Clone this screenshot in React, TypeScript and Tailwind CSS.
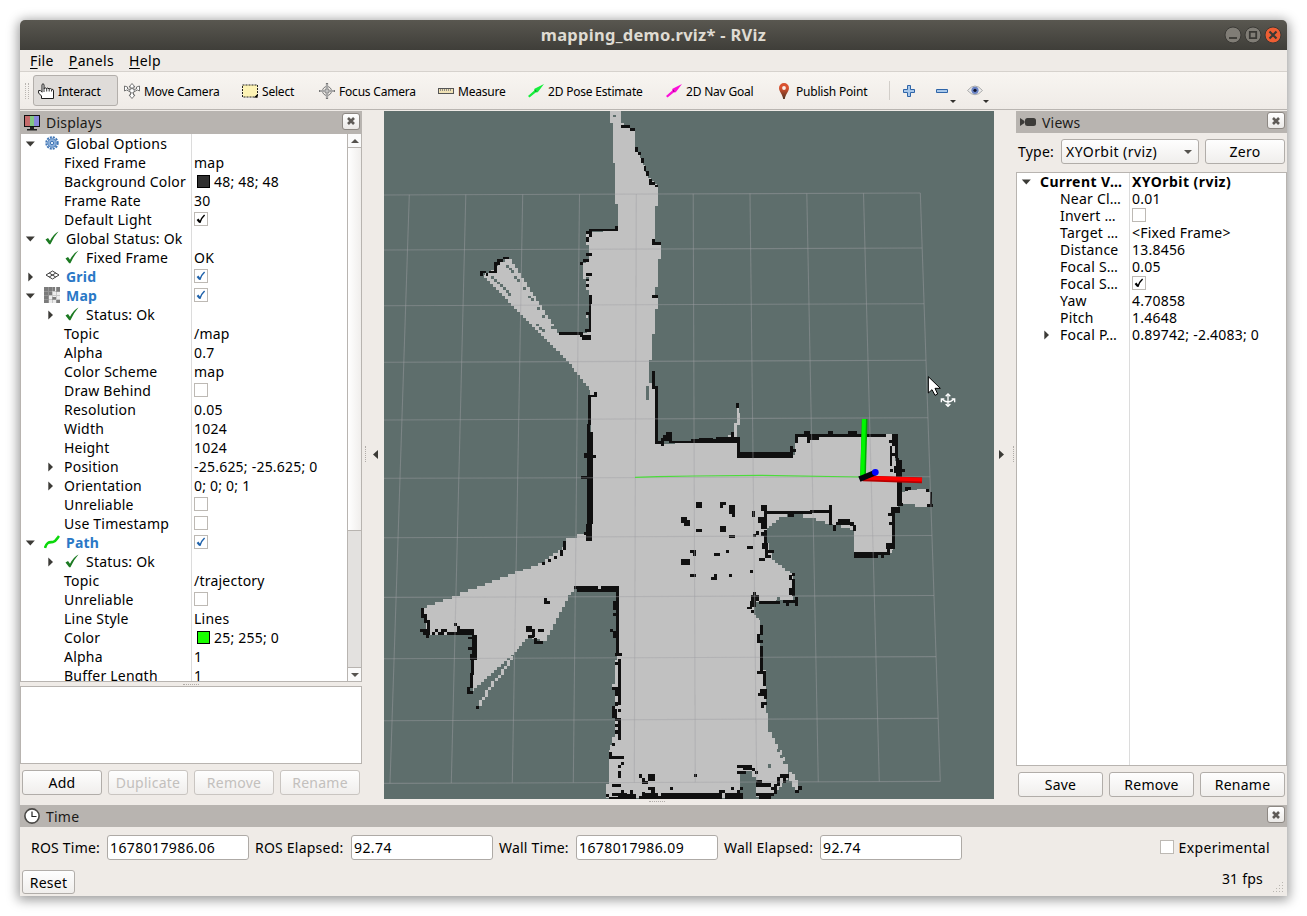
import React from "react";

/* ---------- occupancy map ---------- */

const CELL = 9;

// Turns a polygon into one whose slanted edges are stepped by map cells.
function stepped(points: string): string {
  const pts = points
    .trim()
    .split(/\s+/)
    .map((p) => p.split(",").map(Number));
  let d = `M${pts[0][0]} ${pts[0][1]}`;
  for (let i = 0; i < pts.length; i++) {
    const [x0, y0] = pts[i];
    const [x1, y1] = pts[(i + 1) % pts.length];
    const dx = x1 - x0;
    const dy = y1 - y0;
    const n = Math.max(1, Math.round(Math.min(Math.abs(dx), Math.abs(dy)) / CELL));
    for (let k = 0; k < n; k++) {
      d += `H${x0 + (dx * (k + 0.5)) / n}V${y0 + (dy * (k + 1)) / n}H${x0 + (dx * (k + 1)) / n}`;
    }
  }
  return d + "Z";
}

function rects(list: string): string {
  return list
    .trim()
    .split(/\s+/)
    .map((r) => {
      const [x, y, w, h] = r.split(",");
      return `M${x} ${y}h${w}v${h}h-${w}z`;
    })
    .join("");
}

const FREE = `678,3 711,3 711,39 720,39 720,48 752,55 752,110 762,125 780,165 795,205 822,230 822,288 813,288 813,398
831,400 831,447 822,447 822,530 813,530 813,558 822,560 822,597 813,597 813,672 804,672 804,750 795,750 795,820 813,828 813,1001
930,998 1060,998 1060,1035 1228,1035 1238,985 1238,976 1528,976 1543,1130 1543,1205 1528,1210 1528,1320 1508,1335 1410,1335
1410,1260 1356,1245 1338,1242 1283,1223 1228,1212 1190,1222 1150,1255 1150,1300 1168,1350 1208,1382 1226,1390 1228,1470 1123,1475
1110,1480 1112,1515 1128,1530 1128,1680 1146,1680 1146,1810 1158,1865 1188,1920 1218,1985 1208,2010 1173,2050 1118,2060 1116,2010
1078,1985 1068,1992 1068,2065 666,2065 666,2022 675,2022 675,1920 690,1890 693,1650 700,1650 700,1438 575,1438 555,1455 485,1593
450,1588 435,1578 385,1635 265,1742 270,1565 130,1575 115,1495 290,1428 475,1358 540,1310 552,1283 605,1272 620,1230 620,840 575,785
550,752 456,660 295,495 330,480 345,455 380,447 525,670 600,670 615,660 615,500 598,500 598,460 615,450 615,365 700,360
702,282 693,282 693,158 687,158 687,39 678,39`;

type Patch = { x: number; y: number; wall: string; open?: string; unknown?: string };

const PATCHES: Patch[] = [
  {
    x: 0,
    y: 0,
    wall: `711,45,27,9 738,54,15,9 753,111,9,15 762,126,9,9 771,144,9,15 780,168,6,15 786,183,9,15 795,207,9,18 804,216,9,9
813,225,9,6 693,348,9,12 615,357,87,6 606,363,18,9 615,363,9,18 606,381,9,15 606,429,18,9 597,447,18,9 588,456,9,9 606,489,18,9
606,507,9,6 606,522,9,9 615,555,9,27 615,582,6,84 606,606,9,9 603,657,18,9 525,666,72,9 588,675,12,6 597,675,24,15 804,387,9,18
804,396,27,9 804,555,18,9 357,441,18,6 339,447,18,9 330,456,18,9 330,465,9,24 315,483,24,6 288,483,18,6 288,483,9,15 306,489,6,9`,
    unknown: `687,15,9,6 366,465,9,9 375,474,9,6 381,480,9,9 390,498,9,9 399,507,9,9 417,531,9,9 432,558,9,6 441,564,9,9
459,591,9,9 474,615,9,9 456,642,9,6 465,651,9,9 474,657,9,9 501,648,9,9 321,498,9,9 330,507,9,9 339,516,9,6 348,522,9,9
357,531,9,9 366,540,9,9 372,549,9,9`,
    open: `597,465,9,42 606,372,9,9 606,396,9,9 606,513,9,9 606,531,9,9 606,615,6,9`,
  },
  {
    x: 0,
    y: 660,
    unknown: `786,168,9,42`,
    open: `618,180,12,16`,
    wall: `594,15,27,15 630,186,9,15 612,195,21,6 612,195,9,90 609,282,9,30 609,306,18,276 600,369,9,15 627,375,9,9 591,438,18,9
606,582,18,51 600,606,9,9 537,633,9,27 528,660,9,18 510,678,9,9 492,687,9,6 804,123,9,54 813,168,9,174 822,333,18,9
831,324,9,24 837,315,18,18 846,306,18,27 855,333,75,6 921,330,9,9 891,561,18,18 900,570,18,18`,
  },
  {
    x: 0,
    y: 1350,
    open: `378,288,9,12 369,300,9,18 360,318,9,9 351,327,9,18 342,345,9,9 333,354,9,9 321,363,9,18 312,381,9,9 303,390,9,21
294,411,9,9 285,420,9,18 693,354,9,27 684,372,9,9 684,531,12,60`,
    wall: `474,6,9,9 492,0,9,6 891,0,27,15 918,42,12,9 480,114,9,18 480,123,18,9 570,78,72,9 651,78,54,9 579,87,126,9 696,87,9,195
687,123,9,27 687,159,9,9 678,207,9,9 687,213,9,21 693,279,21,9 702,297,9,138 693,306,9,9 684,381,18,9 693,390,9,18
693,426,9,12 684,438,9,36 693,447,6,27 702,447,9,9 702,474,9,66 693,474,9,9 693,492,9,9 693,510,9,12 684,549,9,9 675,576,9,21 675,588,45,9
711,606,9,9 702,615,9,9 702,633,9,21 684,672,27,9 765,642,9,12 774,654,9,9 774,663,18,9 792,642,21,21 792,681,21,9 801,690,12,12
858,681,9,9 666,702,9,9 675,711,27,6 711,690,9,12 684,699,45,9 702,702,54,15 738,690,9,12 774,696,9,12
783,699,39,12 765,708,66,9 831,699,99,18 111,144,9,30 120,162,9,18 120,180,18,9 129,189,9,36 108,207,27,9 117,213,18,12
126,225,9,9 144,216,9,9 153,207,9,9 162,216,18,9 171,207,18,9 189,216,81,9 210,189,9,9 219,198,9,9 219,207,45,12
261,207,9,18 264,225,15,75 252,231,12,6 252,261,12,9 258,282,20,18 261,300,9,45 258,339,9,45 249,381,9,21 249,393,18,9 276,438,9,9
426,198,18,18 444,207,9,24 432,225,18,9 462,207,18,9 450,234,9,18 459,243,18,9`,
  },
  {
    x: 888,
    y: 780,
    open: `171,114,6,21 171,130,9,35 162,160,10,40 144,195,12,6 617,192,18,9`,
    wall: `168,99,9,15 153,186,9,15 108,201,72,18 57,204,42,6 33,207,80,9 0,213,180,6 171,210,9,45 171,246,168,18 330,228,9,30
339,237,9,9 345,192,9,27 345,192,273,9 372,183,18,10 381,200,9,18 390,201,27,9 444,183,15,9 504,183,27,9 636,192,18,9
636,192,9,36 645,192,9,72 627,210,9,9 630,228,6,60 636,250,12,9 648,264,9,60 654,270,12,50 666,297,9,9 630,297,9,9
642,288,6,20 651,318,15,90 660,400,9,9 633,411,27,18 624,429,12,9 636,429,9,105 627,456,9,9 618,519,27,18 621,537,9,18
522,546,72,18 594,546,30,9 603,555,9,9 675,351,18,9 675,357,9,7 738,357,9,9 750,366,5,45 741,402,18,9 243,405,18,18
252,423,9,54 234,441,18,18 243,459,18,18 261,423,135,9 324,432,18,8 390,420,60,9 447,405,9,60 459,465,9,18 468,456,54,9
474,447,36,15 510,460,12,9 519,465,9,18 252,480,9,45 228,483,9,12 219,492,9,9 243,486,9,12 246,519,18,18 255,528,9,36 264,540,18,9
261,555,12,9 237,564,18,9 336,609,9,9 327,615,9,15 336,627,9,50 327,657,18,18 48,396,18,18 120,396,18,8 120,396,10,18
147,405,18,27 156,432,9,9 216,423,9,18 3,441,18,18 12,450,18,18 48,477,18,9 120,468,18,18 147,495,18,9 30,540,18,9
39,549,9,9 3,567,27,18 102,549,18,9 138,540,9,9 201,528,18,9 30,612,18,9 102,612,9,18 93,621,18,9 147,612,9,9 210,600,9,9`,
  },
  {
    x: 888,
    y: 1410,
    unknown: `264,552,9,12 180,582,9,36 189,573,27,84 216,591,12,66 291,507,9,9 300,525,9,9 309,543,9,9 291,51,9,12`,
    open: `327,576,9,27 336,582,9,18 345,600,9,30 336,600,9,21`,
    wall: `327,24,18,15 345,51,9,27 309,60,45,9 318,69,9,10 237,63,63,9 213,45,24,18 219,36,9,30 210,63,18,18 201,81,15,6
213,90,9,9 240,135,9,30 231,162,9,27 240,180,9,9 240,198,9,75 231,273,18,9 249,273,9,45 240,327,21,12 234,339,27,9
252,348,9,9 243,366,18,9 243,375,9,9 171,555,45,9 189,564,27,6 171,573,27,9 216,564,9,9 225,573,9,9 228,600,18,9
228,609,45,12 273,621,9,9 282,612,9,30 291,591,9,28 300,582,27,12 309,594,9,14 228,639,54,9 237,648,36,9 42,582,9,9
117,630,18,9 153,621,9,9 180,621,9,9 171,630,9,9 0,639,126,18 135,639,54,18 345,630,12,9 354,618,12,12`,
  },
];

const COLS: [number, number][] = [
  [352, 329], [409.3, 390], [465.8, 451.3], [522.7, 512.3], [579.5, 573.3], [636.3, 634.3],
  [693.2, 695.3], [750, 756.7], [806.8, 818.3], [863.5, 879.3], [920.3, 940.3],
];
const ROWS: [number, number][] = [
  [195, 193], [250, 248], [305.7, 303.7], [362.3, 360.3], [420, 417.7], [478.3, 476.7],
  [537.7, 535.5], [597.4, 595.5], [658.7, 656.6], [720.7, 718.4], [783.4, 781.4],
];

function MapView() {
  return (
    <svg className="block h-[688px] w-[610px]" viewBox="0 3 1830 2064">
      <rect x="0" y="3" width="1830" height="2064" fill="#5e6e6c" />
      <g shapeRendering="crispEdges">
        <path d={stepped(FREE)} fill="#c1c1c1" />
        <path d={stepped("1551,1146 1572,1140 1626,1137 1638,1146 1638,1191 1593,1191 1593,1182 1551,1182")} fill="#c1c1c1" />
        {PATCHES.map((p, i) => (
          <g key={i} transform={`translate(${p.x} ${p.y})`}>
            {p.unknown && <path d={rects(p.unknown)} fill="#5e6e6c" />}
            {p.open && <path d={rects(p.open)} fill="#c1c1c1" />}
            <path d={rects(p.wall)} fill="#101010" />
          </g>
        ))}
      </g>
      <g transform="scale(3) translate(-384 -110)" stroke="#a0a0a4" strokeOpacity="0.45" strokeWidth="1.1" fill="none">
        {COLS.map(([t, b], i) => (
          <line key={i} x1={t} y1={195 - i * 0.2} x2={b} y2={783.4 - i * 0.2} />
        ))}
        {ROWS.map(([l, r], i) => (
          <line key={i} x1={384} y1={l} x2={920.3 + ((r - 193) / 588.4) * 20} y2={r} />
        ))}
      </g>
      <path d="M753 1102 820 1100 930 1098 1128 1096 1428 1101" stroke="#4cdc3c" strokeWidth="3.500" fill="none" />
      <path d="M1436 1105 1614 1111" stroke="#b80000" strokeWidth="17" />
      <path d="M1436 1103 1614 1109" stroke="#ff0000" strokeWidth="11" />
      <path d="M1437 1102 1442 927" stroke="#00a800" strokeWidth="17" />
      <path d="M1435 1102 1440 927" stroke="#00f800" strokeWidth="12" />
      <path d="M1434 1104 1466 1091" stroke="#04040c" strokeWidth="17" strokeLinecap="square" />
      <circle cx="1474" cy="1087" r="10" fill="#0000ff" />
      <g transform="translate(888 780)">
        <path d="M745 20v49l11-10 9 17 8-4-8-17h16z" fill="#fff" stroke="#000" strokeWidth="3" strokeLinejoin="round" />
        <g fill="none" stroke="#fff" strokeWidth="4">
          <path d="M804 74v34M786 88q18 16 36 0" />
          <path d="M797 79l7-7 7 7M797 102l7 7 7-7M784 97v-10h9M824 97v-10h-9" />
        </g>
      </g>
    </svg>
  );
}

/* ---------- shared bits ---------- */

function Check({ on, blue }: { on?: boolean; blue?: boolean }) {
  return (
    <span className="flex size-[14px] items-center justify-center border border-[#bdb9b4] bg-white">
      {on && (
        <svg className="size-[12px]" viewBox="0 0 12 12" fill="none" stroke={blue ? "#1f62ab" : "#000"}>
          <path d="M2.500 6.200 5 9.400" strokeWidth="2.200" />
          <path d="M4.800 9.800Q6.200 5 9.600 2" strokeWidth="1.500" />
        </svg>
      )}
    </span>
  );
}

function Arrow({ open }: { open: boolean }) {
  return (
    <svg className="size-[10px]" viewBox="0 0 10 10" fill="#3c3b37">
      {open ? <path d="M.8 2.500h9L5.300 7.500z" /> : <path d="M3.300.5v9l4.700-4.500z" />}
    </svg>
  );
}

function CloseX() {
  return (
    <span className="mb-[3px] flex h-[17px] w-[18px] items-center justify-center rounded-[3px] border border-[#8d8883] bg-gradient-to-b from-white to-[#ebe9e7]">
      <svg className="size-[8px]" viewBox="0 0 8 8" stroke="#5f5b57" strokeWidth="2.600">
        <path d="M1 1l6 6M7 1 1 7" />
      </svg>
    </span>
  );
}

function Button({ label, size, disabled }: { label: string; size: string; disabled?: boolean }) {
  return (
    <button
      className={`flex items-center justify-center rounded-[3px] border bg-gradient-to-b from-[#fefefe] to-[#f0eeec] tracking-[0.25px] ${size} ${
        disabled ? "border-[#c9c5c1] text-[#c3c0bd]" : "border-[#b1ada9] text-black"
      }`}
    >
      {label}
    </button>
  );
}

function DockTitle({ icon, label, height }: { icon: React.ReactNode; label: string; height: string }) {
  return (
    <div className={`flex items-center bg-[#b8b4b0] pr-[2px] pl-1 ${height}`}>
      <span className="flex size-4 items-center justify-center">{icon}</span>
      <span className="flex-1 pl-[6px] text-[#1c1b19]">{label}</span>
      <CloseX />
    </div>
  );
}

/* ---------- tree icons ---------- */

const TickIcon = () => (
  <svg className="size-[14px]" viewBox="0 0 14 14">
    <path d="M.5 8.500 3 7l2 2.800Q8.500 3 13.500.5 8.500 6 5.400 13.300H4.200Z" fill="#1c7a22" />
  </svg>
);
const GearIcon = () => (
  <svg className="size-[14px]" viewBox="0 0 14 14" fill="none">
    <circle cx="7" cy="7" r="5.700" stroke="#3f75b5" strokeWidth="2" strokeDasharray="2 1" />
    <circle cx="7" cy="7" r="4.300" fill="#8db1dc" stroke="#5485bf" />
    <circle cx="7" cy="7" r="1.700" fill="#dfeaf7" stroke="#3f75b5" />
  </svg>
);
const GridIcon = () => (
  <svg className="size-[15px]" viewBox="0 0 15 15" fill="none" stroke="#3d3d3d">
    <path d="M1 7 7.500 3 14 7l-6.500 4zM4.200 5l6.500 4M10.800 5l-6.600 4" />
  </svg>
);
const MapIcon = () => (
  <svg className="size-4" viewBox="0 0 16 16" shapeRendering="crispEdges">
    <path d="M0 0h16v16H0z" fill="#ececec" />
    <path d="M0 0h11v4H8v4H5v8H0zM12 0h4v5h-4zM8 10h4v3H8zM12 13h4v3h-4z" fill="#7b7b7b" />
    <path d="M4 0v16M8 0v16M12 0v16M0 4h16M0 8h16M0 12h16" stroke="#aaa" strokeOpacity=".55" />
  </svg>
);
const PathIcon = () => (
  <svg className="size-4" viewBox="0 0 16 16">
    <path d="M1 14C3 7 6 8.500 9 8S13 4.500 15 2" fill="none" stroke="#0bd80b" strokeWidth="2.600" />
  </svg>
);

/* ---------- displays tree ---------- */

type Row = {
  name: string;
  depth?: number;
  open?: boolean;
  icon?: React.ReactNode;
  value?: string;
  check?: boolean;
  blue?: boolean;
  swatch?: string;
};

const DISPLAY_ROWS: Row[] = [
  { name: "Global Options", depth: 0, open: true, icon: <GearIcon /> },
  { name: "Fixed Frame", value: "map" },
  { name: "Background Color", value: "48; 48; 48", swatch: "bg-[#303030]" },
  { name: "Frame Rate", value: "30" },
  { name: "Default Light", check: true },
  { name: "Global Status: Ok", depth: 0, open: true, icon: <TickIcon /> },
  { name: "Fixed Frame", icon: <TickIcon />, value: "OK" },
  { name: "Grid", depth: 0, open: false, icon: <GridIcon />, check: true, blue: true },
  { name: "Map", depth: 0, open: true, icon: <MapIcon />, check: true, blue: true },
  { name: "Status: Ok", open: false, icon: <TickIcon /> },
  { name: "Topic", value: "/map" },
  { name: "Alpha", value: "0.7" },
  { name: "Color Scheme", value: "map" },
  { name: "Draw Behind", check: false },
  { name: "Resolution", value: "0.05" },
  { name: "Width", value: "1024" },
  { name: "Height", value: "1024" },
  { name: "Position", open: false, value: "-25.625; -25.625; 0" },
  { name: "Orientation", open: false, value: "0; 0; 0; 1" },
  { name: "Unreliable", check: false },
  { name: "Use Timestamp", check: false },
  { name: "Path", depth: 0, open: true, icon: <PathIcon />, check: true, blue: true },
  { name: "Status: Ok", open: false, icon: <TickIcon /> },
  { name: "Topic", value: "/trajectory" },
  { name: "Unreliable", check: false },
  { name: "Line Style", value: "Lines" },
  { name: "Color", value: "25; 255; 0", swatch: "bg-[#19ff00]" },
  { name: "Alpha", value: "1" },
  { name: "Buffer Length", value: "1" },
];

function DisplayRow({ row }: { row: Row }) {
  const top = row.depth === 0;
  return (
    <div className="flex h-[19px] shrink-0 items-center">
      <div className={`flex h-full w-[171px] items-center border-r border-[#dcdcdc] ${top ? "pl-1" : "pl-6"}`}>
        <span className="flex w-[19px] shrink-0 items-center">
          {row.open !== undefined && <Arrow open={row.open} />}
        </span>
        {row.icon && <span className={`flex w-4 shrink-0 items-center justify-center pb-0.5 ${top ? "mr-[6px]" : "mr-[6px]"}`}>{row.icon}</span>}
        <span className={`whitespace-nowrap ${row.blue ? "font-bold text-[#2a78c6]" : ""}`}>{row.name}</span>
      </div>
      <div className="flex items-center pl-[2px]">
        {row.swatch && <span className={`mr-1 ml-[3px] size-[13px] border border-black ${row.swatch}`} />}
        {row.check !== undefined && <span className="pb-0.5"><Check on={row.check} blue={row.blue} /></span>}
        {row.value}
      </div>
    </div>
  );
}

function Displays() {
  return (
    <div className="flex w-[342px] flex-col">
      <DockTitle
        height="h-[23px]"
        label="Displays"
        icon={
          <svg className="size-4" viewBox="0 0 16 16">
            <path d="M0 0h16v12H0z" fill="#111" />
            <path d="M1 1h5v10H1z" fill="#c66b6b" />
            <path d="M6 1h4v10H6z" fill="#83c783" />
            <path d="M10 1h5v10h-5z" fill="#8888dc" />
            <path d="M6 12h4v2h3v1.500H3V14h3z" fill="#222" />
          </svg>
        }
      />
      <div className="flex h-[548px] border-x border-b border-[#b8b4b0] bg-white">
        <div className="flex flex-1 flex-col overflow-hidden">
          {DISPLAY_ROWS.map((r, i) => (
            <DisplayRow key={i} row={r} />
          ))}
        </div>
        <div className="flex w-[14px] flex-col border-l border-[#b8b4b0] bg-[#e3e1df]">
          <div className="flex h-[14px] items-center justify-center border-b border-[#b8b4b0] bg-[#fafafa]">
            <svg className="h-1 w-2" viewBox="0 0 8 4" fill="#55524e"><path d="M0 4h8L4 0z" /></svg>
          </div>
          <div className="h-[383px] border-b border-[#b8b4b0] bg-gradient-to-r from-white to-[#f0eeec]" />
          <div className="flex-1" />
          <div className="flex h-[14px] items-center justify-center border-t border-[#b8b4b0] bg-[#fafafa]">
            <svg className="h-1 w-2" viewBox="0 0 8 4" fill="#55524e"><path d="M0 0h8L4 4z" /></svg>
          </div>
        </div>
      </div>
      <div className="flex h-1 items-center justify-center">
        <span className="w-4 border-t border-dotted border-[#b0aca8]" />
      </div>
      <div className="h-[78px] border border-[#b8b4b0] bg-white" />
      <div className="flex gap-[6px] px-[2px] pt-[6px]">
        <Button label="Add" size="h-[25px] w-[80px]" />
        <Button label="Duplicate" size="h-[25px] w-[80px]" disabled />
        <Button label="Remove" size="h-[25px] w-[80px]" disabled />
        <Button label="Rename" size="h-[25px] w-[80px]" disabled />
      </div>
    </div>
  );
}

/* ---------- views ---------- */

const VIEW_ROWS: Row[] = [
  { name: "Near Cl…", value: "0.01" },
  { name: "Invert …", check: false },
  { name: "Target …", value: "<Fixed Frame>" },
  { name: "Distance", value: "13.8456" },
  { name: "Focal S…", value: "0.05" },
  { name: "Focal S…", check: true },
  { name: "Yaw", value: "4.70858" },
  { name: "Pitch", value: "1.4648" },
  { name: "Focal P…", open: false, value: "0.89742; -2.4083; 0" },
];

function Views() {
  return (
    <div className="flex w-[271px] flex-col">
      <DockTitle
        height="h-[22px]"
        label="Views"
        icon={
          <svg className="h-2 w-4" viewBox="0 0 16 8" fill="#3c3b39">
            <path d="M0 0l4.500 3v2L0 8z" />
            <rect x="5" width="11" height="8" rx="2.500" />
          </svg>
        }
      />
      <div className="flex h-[39px] items-start pt-[6px] pl-[2px]">
        <span className="w-[43px] leading-[25px]">Type:</span>
        <div className="flex h-[25px] w-[138px] items-center justify-between rounded-[3px] border border-[#b1ada9] bg-gradient-to-b from-[#fefefe] to-[#f0eeec] pr-[6px] pl-1">
          <span className="tracking-[0.45px]">XYOrbit (rviz)</span>
          <svg className="h-1 w-2" viewBox="0 0 8 4" fill="#55524e"><path d="M0 0h8L4 4z" /></svg>
        </div>
        <span className="pl-[6px]"><Button label="Zero" size="h-[25px] w-[80px]" /></span>
      </div>
      <div className="flex h-[594px] flex-col border border-[#b8b4b0] bg-white">
        <div className="flex h-[17px] items-center font-bold">
          <div className="flex h-full w-[113px] items-center border-r border-[#dcdcdc] pl-1">
            <span className="flex w-[19px] shrink-0"><Arrow open /></span>
            <span className="whitespace-nowrap tracking-[0.45px]">Current V…</span>
          </div>
          <span className="pl-[2px] tracking-[0.45px]">XYOrbit (rviz)</span>
        </div>
        {VIEW_ROWS.map((r, i) => (
          <div key={i} className="flex h-[17px] items-center">
            <div className="flex h-full w-[113px] items-center border-r border-[#dcdcdc] pl-6">
              <span className="flex w-[19px] shrink-0">{r.open !== undefined && <Arrow open={false} />}</span>
              <span className="whitespace-nowrap">{r.name}</span>
            </div>
            <div className="flex items-center pl-[2px]">
              {r.check !== undefined && <span className="pb-0.5"><Check on={r.check} /></span>}
              {r.value}
            </div>
          </div>
        ))}
        <div className="w-[113px] flex-1 border-r border-[#dcdcdc]" />
      </div>
      <div className="flex gap-[6px] pt-[6px] pl-[2px]">
        <Button label="Save" size="h-[25px] w-[85px]" />
        <Button label="Remove" size="h-[25px] w-[85px]" />
        <Button label="Rename" size="h-[25px] w-[85px]" />
      </div>
    </div>
  );
}

/* ---------- toolbar ---------- */

const HandIcon = () => (
  <svg className="size-4" viewBox="0 0 16 16" fill="#fff" stroke="#1d1d1d">
    <path d="M3.500 15.500V13L.6 10V7.500h1.800l1.600 1.700V1.500q1-1.500 2 0V5.500q1.200-1.300 2.500 0q1.300-1 2.500.3q1.400-.8 2.500.4q2-.3 2 1.800V15.500z" />
    <path d="M6 5v4M8.700 5.500v3M11.200 6v2.500M13.500 6.500v2" strokeWidth=".9" />
  </svg>
);
const MoveIcon = () => (
  <svg className="size-4" viewBox="0 0 16 16" fill="#fff" stroke="#666" strokeWidth=".9">
    <path d="M8 .5 11 4H9v2.500L12.500 6V4l3-1v5l-2-1L9.500 9v3H11l-3 3.500L5 12h1.500V9L2.500 7l-2 1V3l3 1v2L7 6.500V4H5z" />
    <circle cx="8" cy="7.800" r="2.300" />
  </svg>
);
const SelectIcon = () => (
  <svg className="size-4" viewBox="0 0 16 16">
    <rect x=".5" y="2" width="15" height="12" fill="#fdf3b5" stroke="#222" strokeDasharray="2 1" />
    <path d="M15.500 11v3.500H12z" fill="#000" />
  </svg>
);
const FocusIcon = () => (
  <svg className="size-4" viewBox="0 0 16 16" fill="none" stroke="#777">
    <circle cx="8" cy="8" r="4.500" />
    <circle cx="8" cy="8" r="2.300" />
    <path d="M8 0v16M0 8h16" strokeWidth="2.200" />
    <path d="M8 1v14M1 8h14" stroke="#eee" strokeWidth=".8" />
  </svg>
);
const RulerIcon = () => (
  <svg className="size-4" viewBox="0 0 16 16">
    <rect x=".5" y="5.500" width="15" height="5" fill="#f0e2b6" stroke="#555" />
    <path d="M2.500 6v2M4.500 6v2M6.500 6v2M8.500 6v2M10.500 6v2M12.500 6v2" stroke="#777" strokeWidth=".8" />
  </svg>
);
const ArrowTool = ({ color, dark }: { color: string; dark: string }) => (
  <svg className="size-4" viewBox="0 0 16 16">
    <path d="M0 13 6 7.800 6.500 5.800 16 1 9.800 9.200 7.700 9.500 1.500 14.500z" fill={color} />
    <path d="M6.800 6.600 8.800 8.300 7.600 9z" fill={dark} />
  </svg>
);
const PinIcon = () => (
  <svg className="size-4" viewBox="0 0 16 16">
    <defs>
      <linearGradient id="pin" x2="0" y2="1">
        <stop offset=".3" stopColor="#d9512f" />
        <stop offset="1" stopColor="#4e3220" />
      </linearGradient>
    </defs>
    <path d="M8 0a5 5 0 0 1 5 5c0 3.500-3.500 6-4.200 11H7.200C6.500 11 3 8.500 3 5a5 5 0 0 1 5-5z" fill="url(#pin)" />
    <circle cx="8" cy="5" r="1.900" fill="#fbeee9" />
  </svg>
);

const TOOLS = [
  { label: "Move Camera", icon: <MoveIcon />, w: "w-[118px]" },
  { label: "Select", icon: <SelectIcon />, w: "w-[77px]" },
  { label: "Focus Camera", icon: <FocusIcon />, w: "w-[119px]" },
  { label: "Measure", icon: <RulerIcon />, w: "w-[90px]" },
  { label: "2D Pose Estimate", icon: <ArrowTool color="#16ee3c" dark="#0a7a20" />, w: "w-[138px]" },
  { label: "2D Nav Goal", icon: <ArrowTool color="#fb10d8" dark="#86066f" />, w: "w-[110px]" },
  { label: "Publish Point", icon: <PinIcon />, w: "w-[119px]" },
];

const DropMark = () => (
  <svg className="mt-[21px] h-[3px] w-[6px]" viewBox="0 0 6 3" fill="#33312e"><path d="M0 0h6L3 3z" /></svg>
);

function Toolbar() {
  return (
    <div className="flex h-[38px] items-center border-b border-[#b9b5b1] bg-gradient-to-b from-[#f8f5f1] to-[#efebe7] text-[12px]">
      <div className="ml-[5px] flex w-2 gap-[2px]">
        <span className="h-4 border-l border-dotted border-[#b9b5b1]" />
        <span className="h-4 border-l border-dotted border-[#b9b5b1]" />
      </div>
      <div className="flex h-[31px] w-[85px] items-center gap-1 rounded-[3px] border border-[#b3afab] bg-[#dfdcd9] pl-1">
        <HandIcon />
        <span className="pt-0.5 tracking-[-0.2px]">Interact</span>
      </div>
      {TOOLS.map((t) => (
        <div key={t.label} className={`flex items-center gap-1 pl-[6px] ${t.w}`}>
          {t.icon}
          <span className="pt-0.5 whitespace-nowrap tracking-[-0.2px]">{t.label}</span>
        </div>
      ))}
      <span className="h-[19px] w-[14px] border-l border-[#d2cec9]" />
      <svg className="size-3" viewBox="0 0 12 12" fill="#a9c8ea" stroke="#2f65a8">
        <path d="M4.500.5h3v4h4v3h-4v4h-3v-4h-4v-3h4z" />
      </svg>
      <svg className="ml-[21px] h-1 w-3" viewBox="0 0 12 4" fill="#a9c8ea" stroke="#2f65a8">
        <path d="M.5.5h11v3H.5z" />
      </svg>
      <span className="ml-[2px]"><DropMark /></span>
      <svg className="ml-[11px] h-[11px] w-4" viewBox="0 0 16 11">
        <path d="M.5 5.500Q8-3.500 15.500 5.500 8 14 .5 5.500z" fill="#ecebeb" stroke="#aaa" />
        <circle cx="8" cy="5.300" r="3.600" fill="#6a83c4" />
        <circle cx="8" cy="5.300" r="1.600" fill="#10142c" />
      </svg>
      <DropMark />
    </div>
  );
}

function TimeField({ label, value, w }: { label: string; value: string; w: string }) {
  return (
    <div className="flex items-center">
      <span className={`whitespace-nowrap ${w}`}>{label}</span>
      <span className="flex h-[25px] w-[142px] items-center rounded-[3px] border border-[#aeaaa6] bg-white pl-[2px] tracking-[0.4px]">{value}</span>
    </div>
  );
}

export default function App() {
  return (
    <div className="flex h-[916px] w-[1307px] bg-white p-5 font-['Noto_Sans',sans-serif] text-[14px] leading-[17px] tracking-[0.22px] text-black">
      <div className="flex h-[876px] w-[1267px] flex-col rounded-t-[5px] bg-[#efebe7] shadow-[0_2px_12px_2px_rgba(0,0,0,0.4)]">
        <div className="flex h-[30px] items-center rounded-t-[5px] bg-gradient-to-b from-[#595750] to-[#3f3e39] pr-[5px]">
          <span className="flex-1 pb-0.5 pl-[63px] text-center text-[16.5px] font-bold tracking-[0.28px] text-[#dfdbd2]">mapping_demo.rviz* - RViz</span>
          <svg className="h-[18px] w-[58px]" viewBox="0 0 58 18" fill="none" stroke="#3a3935">
            <circle cx="9" cy="9" r="8" fill="#807d76" />
            <path d="M5 12h8" strokeWidth="1.800" />
            <circle cx="29" cy="9" r="8" fill="#807d76" />
            <path d="M25.800 5.800h6.400v6.400h-6.400z" strokeWidth="1.800" />
            <circle cx="49" cy="9" r="8" fill="#ee5e33" />
            <path d="M45.500 5.500l7 7M52.500 5.500l-7 7" strokeWidth="2.200" />
          </svg>
        </div>
        <div className="flex h-[22px] items-center gap-[15px] border-b border-[#d6d2cd] pl-[10px] tracking-[0.35px]">
          <span><u className="underline-offset-2">F</u>ile</span>
          <span><u className="underline-offset-2">P</u>anels</span>
          <span><u className="underline-offset-2">H</u>elp</span>
        </div>
        <Toolbar />
        <div className="flex h-[695px] pt-px">
          <Displays />
          <div className="flex w-[22px] items-center pb-2">
            <span className="ml-[3px] h-4 border-l border-dotted border-[#b0aca8]" />
            <svg className="ml-[7px] h-[9px] w-[5px]" viewBox="0 0 5 9" fill="#3c3b37"><path d="M5 0v9L0 4.500z" /></svg>
          </div>
          <div className="flex flex-col items-center">
            <MapView />
            <span className="mt-0.5 ml-[-65px] w-4 border-t border-dotted border-[#b0aca8]" />
          </div>
          <div className="flex w-[22px] items-center pb-2">
            <svg className="ml-[5px] h-[9px] w-[5px]" viewBox="0 0 5 9" fill="#3c3b37"><path d="M0 0v9l5-4.500z" /></svg>
            <span className="ml-[9px] h-4 border-l border-dotted border-[#b0aca8]" />
          </div>
          <Views />
        </div>
        <DockTitle
          height="h-[22px]"
          label="Time"
          icon={
            <svg className="size-4" viewBox="0 0 16 16" fill="none">
              <circle cx="8" cy="8" r="7.100" fill="#fff" stroke="#4a4845" strokeWidth="1.600" />
              <path d="M8 3.500V8.500h4.500" stroke="#222" strokeWidth="1.200" />
            </svg>
          }
        />
        <div className="flex h-[40px] items-center pr-[17px] pl-[11px]">
          <TimeField label="ROS Time:" value="1678017986.06" w="w-[76px]" />
          <span className="pl-[6px]"><TimeField label="ROS Elapsed:" value="92.74" w="w-[96px]" /></span>
          <span className="pl-[6px]"><TimeField label="Wall Time:" value="1678017986.09" w="w-[77px]" /></span>
          <span className="pl-[6px]"><TimeField label="Wall Elapsed:" value="92.74" w="w-[96px]" /></span>
          <span className="ml-auto flex items-center gap-[5px] tracking-[0.35px]"><Check />Experimental</span>
        </div>
        <div className="flex flex-1 items-start justify-between pt-[3px] pr-1 pl-[2px]">
          <Button label="Reset" size="h-[24px] w-[53px]" />
          <div className="flex items-start">
            <span className="pr-[10px]">31 fps</span>
            <svg className="mt-[12px] size-[10px]" viewBox="0 0 10 10" fill="#bab6b1">
              <path d="M9 0h1v1H9zM6 3h1v1H6zM9 3h1v1H9zM3 6h1v1H3zM6 6h1v1H6zM9 6h1v1H9zM0 9h1v1H0zM3 9h1v1H3zM6 9h1v1H6zM9 9h1v1H9z" />
            </svg>
          </div>
        </div>
      </div>
    </div>
  );
}
